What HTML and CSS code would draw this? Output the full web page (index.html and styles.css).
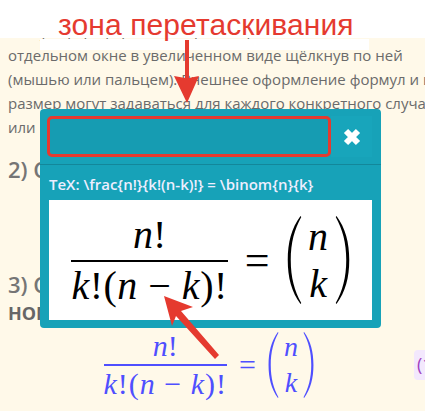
FILE: index.html
```html
<!DOCTYPE html>
<html lang="ru">
<head>
  <meta charset="UTF-8">
  <title>Формула</title>
  <link rel="stylesheet" href="styles.css">
</head>
<body>
  <div class="caption">зона перетаскивания</div>

  <div class="article">
    <div class="cover"></div>
    <p class="clipped-line">Любую формулу можно просмотреть в</p>
    <p class="line">отдельном окне в увеличенном виде щёлкнув по ней</p>
    <p class="line">(мышью или пальцем). Внешнее оформление формул и их</p>
    <p class="line">размер могут задаваться для каждого конкретного случая</p>
    <p class="line">или</p>
    <h2 class="step step-two">2) Способ</h2>
    <h2 class="step step-three">3) Способ</h2>
    <h3 class="step-sub">НОМ</h3>
    <div class="formula-row">
      <div class="math math-small">
        <div class="frac">
          <div class="num"><i>n</i>!</div>
          <div class="den"><i>k</i>!(<i>n</i> − <i>k</i>)!</div>
        </div>
        <span class="eq">=</span>
        <div class="binom">
          <svg class="paren" viewBox="0 0 20 100" preserveAspectRatio="none"><path d="M18 0 C6 14 1 30 1 50 C1 70 6 86 18 100 L19 99 C10 85 5 70 5 50 C5 30 10 15 19 1 Z"/></svg>
          <div class="binom-col"><i>n</i><i>k</i></div>
          <svg class="paren" viewBox="0 0 20 100" preserveAspectRatio="none"><path d="M2 0 C14 14 19 30 19 50 C19 70 14 86 2 100 L1 99 C10 85 15 70 15 50 C15 30 10 15 1 1 Z"/></svg>
        </div>
      </div>
      <span class="eq-number">(1)</span>
    </div>
  </div>

  <div class="modal">
    <div class="modal-head">
      <div class="drag-zone"></div>
      <div class="close">
        <svg width="18" height="18" viewBox="0 0 18 18"><path d="M3 3 L15 15 M15 3 L3 15" stroke="#fff" stroke-width="6"/></svg>
      </div>
    </div>
    <div class="modal-body">
      <div class="tex">TeX: \frac{n!}{k!(n-k)!} = \binom{n}{k}</div>
      <div class="math-box">
        <div class="math math-big">
          <div class="frac">
            <div class="num"><i>n</i>!</div>
            <div class="den"><i>k</i>!(<i>n</i> − <i>k</i>)!</div>
          </div>
          <span class="eq">=</span>
          <div class="binom">
            <svg class="paren" viewBox="0 0 20 100" preserveAspectRatio="none"><path d="M18 0 C6 14 1 30 1 50 C1 70 6 86 18 100 L19 99 C10 85 5 70 5 50 C5 30 10 15 19 1 Z"/></svg>
            <div class="binom-col"><i>n</i><i>k</i></div>
            <svg class="paren" viewBox="0 0 20 100" preserveAspectRatio="none"><path d="M2 0 C14 14 19 30 19 50 C19 70 14 86 2 100 L1 99 C10 85 15 70 15 50 C15 30 10 15 1 1 Z"/></svg>
          </div>
        </div>
      </div>
    </div>
  </div>

  <!-- red arrows drawn on top of the screenshot -->
  <svg class="arrows" width="425" height="420" viewBox="0 0 425 420">
    <path d="M185 40 H189 V78 L199 76 L187 103 L174 76 L185 78 Z" fill="#e53a2f"/>
    <path d="M219 355 L215 359 L176 316 L172 326 L164 296 L193 307 L181 311 Z" fill="#e53a2f"/>
  </svg>
</body>
</html>
```

FILE: styles.css
```css
html, body {
  margin: 0;
  padding: 0;
}
body {
  width: 425px;
  height: 420px;
  position: relative;
  overflow: hidden;
  background: #fff;
  font-family: "Open Sans", sans-serif;
}
.caption {
  height: 38px;
  box-sizing: border-box;
  padding: 7px 0 0 58px;
  position: relative;
  z-index: 2;
  font-family: "Liberation Sans", sans-serif;
  font-size: 30px;
  letter-spacing: 0.1px;
  line-height: 36px;
  white-space: nowrap;
  color: #e53a2f;
}
.article {
  height: 373px;
  position: relative;
  overflow: hidden;
  background: #fff9e9;
  color: #6b6b6b;
}
.cover {
  position: absolute;
  left: 40px;
  top: 1px;
  width: 329px;
  height: 11px;
  background: #fff;
}
.clipped-line {
  margin: -19px 0 0 8px;
  font-size: 15px;
  line-height: 24px;
  white-space: nowrap;
}
.line {
  margin: 0 0 0 8px;
  font-size: 15px;
  line-height: 24px;
  white-space: nowrap;
}
.step {
  margin: 0 0 0 8px;
  font-size: 22px;
  font-weight: 600;
  line-height: 30px;
  color: #757575;
}
.step-two {
  margin-top: 15px;
}
.step-three {
  margin-top: 85px;
}
.step-sub {
  margin: 0 0 0 8px;
  font-size: 18px;
  font-weight: 700;
  line-height: 28px;
  color: #666;
}
.formula-row {
  display: flex;
  align-items: center;
  justify-content: flex-end;
  margin-top: 1px;
}
.eq-number {
  width: 11px;
  height: 30px;
  margin-left: 100px;
  padding-left: 3px;
  box-sizing: border-box;
  overflow: hidden;
  background: #f3e8fd;
  border-radius: 4px 0 0 4px;
  color: #a040c0;
  font-size: 18px;
  line-height: 28px;
}

/* formula */
.math {
  display: flex;
  align-items: center;
  font-family: "Liberation Serif", serif;
  white-space: nowrap;
}
.frac {
  display: flex;
  flex-direction: column;
  align-items: center;
}
.num {
  border-bottom: 2px solid currentColor;
  align-self: stretch;
  text-align: center;
}
.binom {
  display: flex;
  align-items: center;
}
.binom-col {
  display: flex;
  flex-direction: column;
  align-items: center;
}
.paren {
  display: block;
  fill: currentColor;
}
.math-big {
  color: #000;
  font-size: 40px;
}
.math-big .den {
  letter-spacing: 0.5px;
  line-height: 48px;
}
.math-big .num {
  line-height: 50px;
}
.math-big .eq {
  font-size: 44px;
  margin: 0 17px;
}
.math-big .paren {
  width: 15px;
  height: 88px;
}
.math-big .binom-col {
  line-height: 47px;
  width: 33px;
}
.math-small {
  color: #4f4fff;
  font-size: 30px;
}
.math-small .num {
  line-height: 36px;
}
.math-small .den {
  letter-spacing: 1px;
  line-height: 36px;
}
.math-small .eq {
  margin: 0 12px;
}
.math-small .paren {
  width: 11px;
  height: 66px;
}
.math-small .binom-col {
  font-size: 28px;
  line-height: 36px;
  width: 24px;
}

/* modal window */
.modal {
  position: absolute;
  left: 40px;
  top: 109px;
  width: 341px;
  height: 219px;
  z-index: 3;
  box-sizing: border-box;
  background: #17a2b8;
  border-radius: 4px;
  display: flex;
  flex-direction: column;
}
.modal-head {
  height: 56px;
  box-sizing: border-box;
  padding: 7px 9px 7px 7px;
  display: flex;
  border-bottom: 1px solid #13879a;
}
.drag-zone {
  width: 284px;
  height: 41px;
  box-sizing: border-box;
  background: #169cb2;
  border: 3px solid #e53a2f;
  border-radius: 5px;
}
.close {
  flex: 1;
  display: flex;
  align-items: center;
  justify-content: center;
  background: #18a5bb;
}
.modal-body {
  padding: 0 9px;
}
.tex {
  height: 35px;
  font-size: 15px;
  font-weight: 600;
  line-height: 38px;
  color: #eef;
  white-space: nowrap;
}
.math-box {
  height: 120px;
  background: #fff;
  display: flex;
  align-items: center;
  justify-content: center;
}

.arrows {
  position: absolute;
  left: 0;
  top: 0;
  z-index: 4;
}
```
